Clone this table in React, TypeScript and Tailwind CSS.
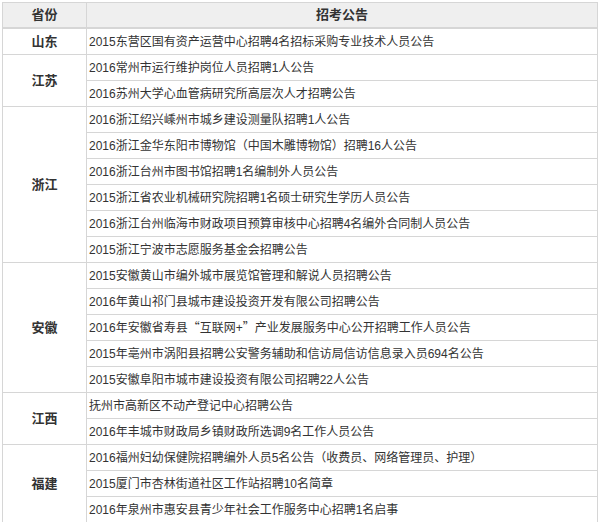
import React from "react";

type Group = { p: string; items: React.ReactNode[] };

const cjk = { fontFamily: '"Noto Sans CJK SC", sans-serif' };

const groups: Group[] = [
  { p: "山东", items: ["2015东营区国有资产运营中心招聘4名招标采购专业技术人员公告"] },
  {
    p: "江苏",
    items: ["2016常州市运行维护岗位人员招聘1人公告", "2016苏州大学心血管病研究所高层次人才招聘公告"],
  },
  {
    p: "浙江",
    items: [
      "2016浙江绍兴嵊州市城乡建设测量队招聘1人公告",
      "2016浙江金华东阳市博物馆（中国木雕博物馆）招聘16人公告",
      "2016浙江台州市图书馆招聘1名编制外人员公告",
      "2015浙江省农业机械研究院招聘1名硕士研究生学历人员公告",
      "2016浙江台州临海市财政项目预算审核中心招聘4名编外合同制人员公告",
      "2015浙江宁波市志愿服务基金会招聘公告",
    ],
  },
  {
    p: "安徽",
    items: [
      "2015安徽黄山市编外城市展览馆管理和解说人员招聘公告",
      "2016年黄山祁门县城市建设投资开发有限公司招聘公告",
      <>
        2016年安徽省寿县<span style={cjk} className="inline-block w-[12px] text-right">“</span>互联网+
        <span style={cjk} className="inline-block w-[12px] text-left">”</span>产业发展服务中心公开招聘工作人员公告
      </>,
      "2015年亳州市涡阳县招聘公安警务辅助和信访局信访信息录入员694名公告",
      "2015安徽阜阳市城市建设投资有限公司招聘22人公告",
    ],
  },
  {
    p: "江西",
    items: ["抚州市高新区不动产登记中心招聘公告", "2016年丰城市财政局乡镇财政所选调9名工作人员公告"],
  },
  {
    p: "福建",
    items: [
      "2016福州妇幼保健院招聘编外人员5名公告（收费员、网络管理员、护理）",
      "2015厦门市杏林街道社区工作站招聘10名简章",
      "2016年泉州市惠安县青少年社会工作服务中心招聘1名启事",
    ],
  },
];

const spanClass: Record<number, string> = {
  1: "row-span-1",
  2: "row-span-2",
  3: "row-span-3",
  5: "row-span-5",
  6: "row-span-6",
};

export default function App() {
  return (
    <div
      className="w-[600px] h-[522px] bg-white pt-[2px] pl-[2px] text-[#333]"
      style={{ fontFamily: '"Liberation Sans", "Noto Sans CJK SC", sans-serif' }}
    >
      <div className="grid w-[596px] grid-cols-[83px_510px] auto-rows-[25px] gap-[1px] bg-[#d6d6d6] p-[1px]">
        <div className="flex h-[24px] items-center justify-center bg-[#efefef] text-[13px] font-bold">省份</div>
        <div className="flex h-[24px] items-center justify-center bg-[#efefef] text-[13px] font-bold">招考公告</div>
        {groups.map((g) => (
          <React.Fragment key={g.p}>
            <div
              className={`${spanClass[g.items.length]} flex items-center justify-center bg-white text-[13px] font-bold`}
            >
              {g.p}
            </div>
            {g.items.map((t, i) => (
              <div
                key={i}
                className="col-start-2 flex items-center bg-white pl-[2px] text-[12px] whitespace-pre"
              >
                <span>{t}</span>
              </div>
            ))}
          </React.Fragment>
        ))}
      </div>
    </div>
  );
}
